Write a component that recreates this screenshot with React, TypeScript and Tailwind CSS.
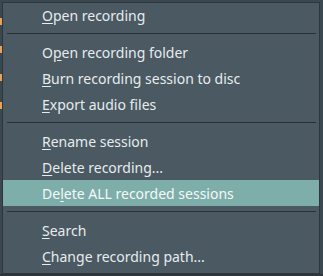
import React from "react";

type Item = { label: string; key: number } | "sep";

const ITEMS: Item[] = [
  { label: "Open recording", key: 0 },
  "sep",
  { label: "Open recording folder", key: 1 },
  { label: "Burn recording session to disc", key: 0 },
  { label: "Export audio files", key: 0 },
  "sep",
  { label: "Rename session", key: 0 },
  { label: "Delete recording...", key: 0 },
  { label: "Delete ALL recorded sessions", key: 2 },
  "sep",
  { label: "Search", key: 0 },
  { label: "Change recording path...", key: 0 },
];

const ACTIVE = "Delete ALL recorded sessions";

function MenuLabel({ label, k }: { label: string; k: number }) {
  return (
    <span>
      {label.slice(0, k)}
      <span className="underline underline-offset-2">{label[k]}</span>
      {label.slice(k + 1)}
    </span>
  );
}

export default function App() {
  return (
    <div
      className="w-[323px] h-[276px] bg-[#3c4850] flex flex-col overflow-hidden"
      style={{ fontFamily: '"Noto Sans", "Open Sans", sans-serif' }}
    >
      <div className="flex flex-1">
        {/* strip of the window behind the menu */}
        <div className="w-[2px] flex flex-col gap-[21px] pt-[18px]">
          <div className="h-[7px] bg-[#e8a25a]" />
          <div className="h-[7px] bg-[#e8a25a]" />
          <div className="h-[7px] bg-[#e8a25a]" />
          <div className="h-[7px] bg-[#e8a25a]" />
        </div>
        <div className="mt-[2px] w-[318px] h-[272px] border border-[#2c363c] bg-[#4b5962] text-[14px] text-[#e6ecee]">
          {ITEMS.map((it, i) =>
            it === "sep" ? (
              <div key={i} className="h-[11px] flex items-center pl-[4px] pr-[3px]">
                <div className="h-px w-full bg-[#283035]" />
              </div>
            ) : (
              <div
                key={i}
                className={
                  "flex items-center pl-[39px] " +
                  (i === 0 ? "h-[25px] " : "h-[26px] ") +
                  (it.label === ACTIVE ? "bg-[#7eaea9] text-[#f4f8f8]" : "")
                }
              >
                <MenuLabel label={it.label} k={it.key} />
              </div>
            )
          )}
        </div>
      </div>
      <div className="h-[2px] bg-[#2c363c]" />
    </div>
  );
}
